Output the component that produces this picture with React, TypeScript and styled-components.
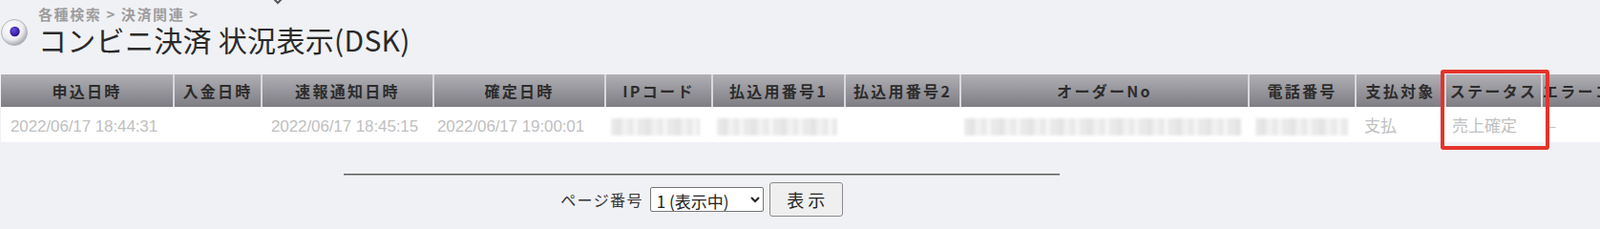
import React from "react";
import styled, { createGlobalStyle } from "styled-components";

const Global = createGlobalStyle`
  html, body { margin: 0; padding: 0; background: #f0f1f5; overflow: hidden; }
  body { font-family: "Noto Sans CJK JP", "Noto Sans", sans-serif; color: #333; }
`;

const Page = styled.div`
  position: relative;
  width: 1676px;
  height: 236px;
  padding-left: 1px;
  box-sizing: border-box;
`;

const TopMark = styled.svg`
  position: absolute;
  left: 285px;
  top: -3px;
`;

const TitleBar = styled.div`
  display: flex;
  align-items: flex-end;
  padding-top: 5px;
  height: 51px;
`;

const Bullet = styled.svg`
  flex: none;
  margin-left: -1px;
  margin-bottom: 7px;
`;

const TitleText = styled.div`
  display: flex;
  flex-direction: column;
  margin-left: 10px;
`;

const Crumb = styled.div`
  font-size: 15px;
  line-height: 17px;
  font-weight: 700;
  color: #9d9d9d;
  letter-spacing: 1.6px;
`;

const Title = styled.h1`
  margin: 3px 0 0;
  font-size: 30px;
  line-height: 30px;
  font-weight: 400;
  color: #2a2a2a;
  white-space: nowrap;
  letter-spacing: 0.3px;
`;

const TableWrap = styled.div`
  margin-top: 22px;
  overflow: hidden;
`;

const Table = styled.table`
  border-collapse: collapse;
  table-layout: fixed;
  width: 1716px;
`;

const Th = styled.th`
  height: 34px;
  padding: 0;
  background: linear-gradient(#b0afb4, #7e7d84);
  border-right: 2px solid #d9d9dc;
  font-size: 16px;
  font-weight: 700;
  letter-spacing: 2.3px;
  color: #2c2c2c;
  text-align: center;
  white-space: nowrap;
  overflow: hidden;
`;

const Td = styled.td<{ $indent?: number }>`
  height: 37px;
  padding: 0 0 0 ${(p) => p.$indent ?? 10}px;
  background: #fff;
  font-size: 17px;
  color: #c0c0c0;
  white-space: nowrap;
  overflow: hidden;
  vertical-align: middle;
`;

const DateText = styled.span`
  font-family: "Liberation Sans", Arial, sans-serif;
  font-size: 17px;
  letter-spacing: -0.1px;
`;

const Redacted = styled.span<{ $w: number }>`
  display: inline-block;
  vertical-align: middle;
  width: ${(p) => p.$w}px;
  height: 18px;
  background: repeating-linear-gradient(
    90deg,
    #ececec 0px,
    #e2e2e2 9px,
    #f4f4f4 14px,
    #e6e6e6 22px,
    #fafafa 25px,
    #e4e4e4 31px
  );
  filter: blur(1.6px);
`;

const Marker = styled.div`
  position: absolute;
  left: 1509px;
  top: 73px;
  width: 114px;
  height: 84px;
  box-sizing: border-box;
  border: 4px solid #e3342b;
  border-radius: 3px;
  pointer-events: none;
`;

const Footer = styled.div`
  width: 1468px;
  margin-top: 33px;
  display: flex;
  flex-direction: column;
  align-items: center;
`;

const Rule = styled.hr`
  width: 750px;
  margin: 0;
  border: none;
  border-top: 1px solid #5a5a5a;
  border-bottom: 1px solid #a8a8a8;
`;

const Pager = styled.form`
  display: flex;
  align-items: center;
  margin-top: 7px;
  gap: 6px;
`;

const PagerLabel = styled.span`
  font-size: 16px;
  letter-spacing: 1.4px;
  color: #333;
  margin-right: 1px;
`;

const PageSelect = styled.select`
  height: 26px;
  width: 119px;
  font-family: "Noto Sans CJK JP", sans-serif;
  font-size: 17px;
  color: #222;
  background: #fff;
  border: 1px solid #767676;
  border-radius: 2px;
  padding: 0 0 0 2px;
`;

const ShowButton = styled.button`
  width: 77px;
  height: 36px;
  font-family: "Noto Sans CJK JP", sans-serif;
  font-size: 18px;
  color: #222;
  background: #efefef;
  border: 1px solid #8a8a8a;
  border-radius: 3px;
  padding: 0;
`;

const columns = [
  { label: "申込日時", w: 181 },
  { label: "入金日時", w: 92 },
  { label: "速報通知日時", w: 180 },
  { label: "確定日時", w: 180 },
  { label: "IPコード", w: 112 },
  { label: "払込用番号1", w: 139 },
  { label: "払込用番号2", w: 121 },
  { label: "オーダーNo", w: 302 },
  { label: "電話番号", w: 112 },
  { label: "支払対象", w: 94 },
  { label: "ステータス", w: 101 },
  { label: "エラーコード", w: 102 },
];

export default function App() {
  return (
    <Page>
      <Global />
      <TopMark width="12" height="8" viewBox="0 0 12 8">
        <path d="M2 2 L6 6 L10 2" stroke="#555" strokeWidth="2" fill="none" />
      </TopMark>
      <TitleBar>
        <Bullet width="30" height="30" viewBox="0 0 30 30">
          <defs>
            <radialGradient id="ball" cx="0.4" cy="0.35" r="0.7">
              <stop offset="0" stopColor="#ffffff" />
              <stop offset="0.6" stopColor="#eeeef2" />
              <stop offset="1" stopColor="#9c9ca6" />
            </radialGradient>
            <radialGradient id="dot" cx="0.4" cy="0.35" r="0.7">
              <stop offset="0" stopColor="#6a4fe0" />
              <stop offset="1" stopColor="#2a0c8c" />
            </radialGradient>
          </defs>
          <circle cx="15" cy="15" r="13.5" fill="url(#ball)" stroke="#b4b4bc" strokeWidth="1" />
          <circle cx="15.5" cy="14" r="5.2" fill="url(#dot)" />
        </Bullet>
        <TitleText>
          <Crumb>各種検索 &gt; 決済関連 &gt;</Crumb>
          <Title>コンビニ決済 状況表示(DSK)</Title>
        </TitleText>
      </TitleBar>

      <TableWrap>
        <Table>
          <colgroup>
            {columns.map((c) => (
              <col key={c.label} style={{ width: c.w }} />
            ))}
          </colgroup>
          <thead>
            <tr>
              {columns.map((c) => (
                <Th key={c.label}>{c.label}</Th>
              ))}
            </tr>
          </thead>
          <tbody>
            <tr>
              <Td><DateText>2022/06/17 18:44:31</DateText></Td>
              <Td />
              <Td><DateText>2022/06/17 18:45:15</DateText></Td>
              <Td $indent={4}><DateText>2022/06/17 19:00:01</DateText></Td>
              <Td $indent={6}><Redacted $w={93} /></Td>
              <Td $indent={5}><Redacted $w={126} /></Td>
              <Td />
              <Td $indent={4}><Redacted $w={290} /></Td>
              <Td $indent={7}><Redacted $w={97} /></Td>
              <Td $indent={9}>支払</Td>
              <Td $indent={7}>売上確定</Td>
              <Td $indent={6}>–</Td>
            </tr>
          </tbody>
        </Table>
      </TableWrap>

      <Footer>
        <Rule />
        <Pager onSubmit={(e) => e.preventDefault()}>
          <PagerLabel>ページ番号</PagerLabel>
          <PageSelect defaultValue="1">
            <option value="1">1 (表示中)</option>
          </PageSelect>
          <ShowButton type="submit">表 示</ShowButton>
        </Pager>
      </Footer>

      <Marker />
    </Page>
  );
}
